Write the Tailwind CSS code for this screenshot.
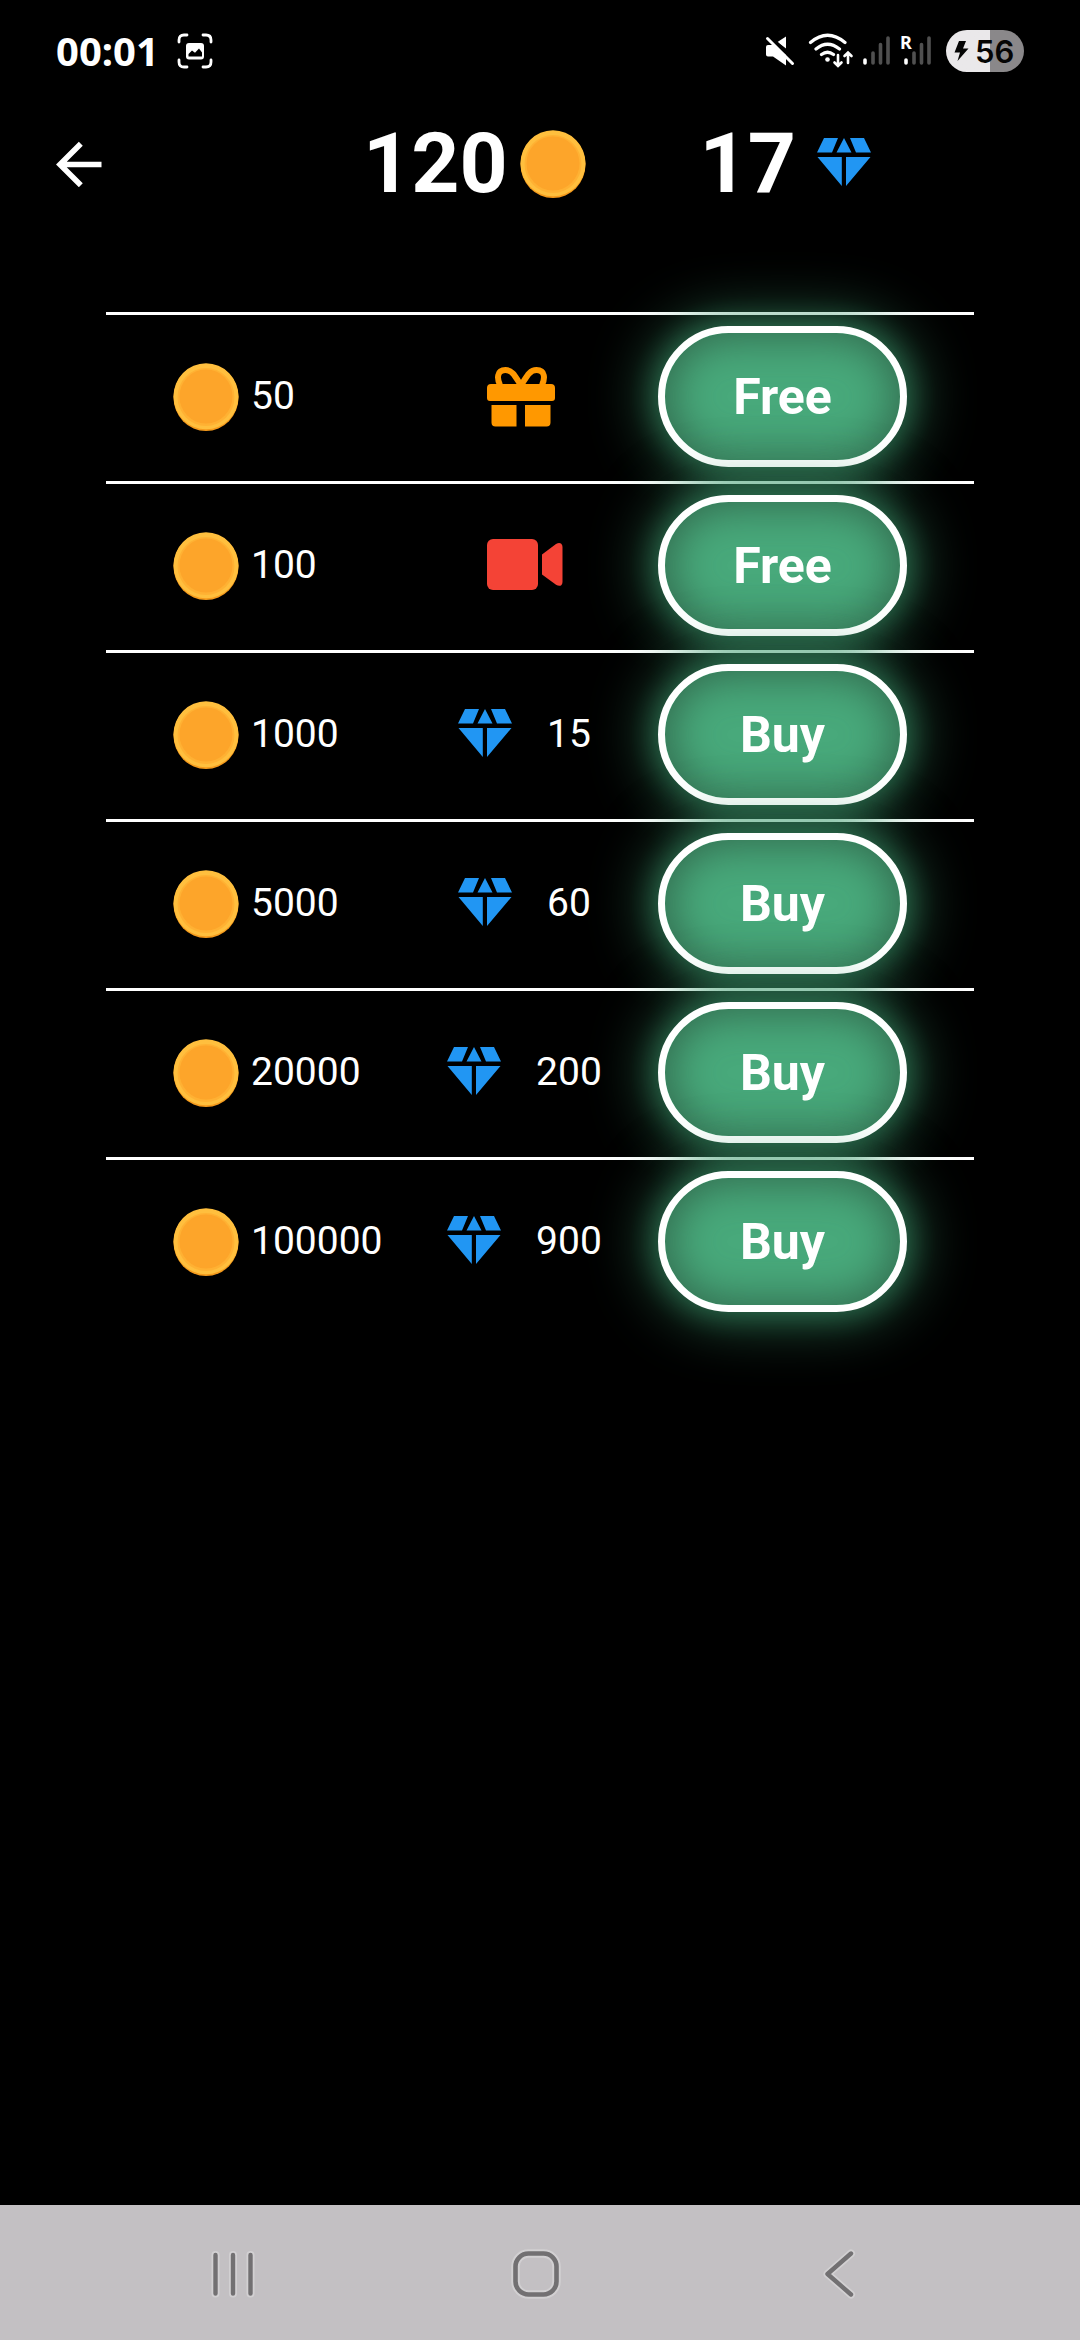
<!DOCTYPE html>
<html lang="en">
<head>
<meta charset="utf-8">
<meta name="viewport" content="width=device-width, initial-scale=1">
<title>Coin shop</title>
<script src="https://cdn.jsdelivr.net/npm/@tailwindcss/browser@4"></script>
</head>
<body class="flex min-h-screen flex-col bg-black font-['Roboto',sans-serif] text-white">

<!-- shared icons -->
<svg class="hidden" aria-hidden="true">
  <symbol id="coin" viewBox="0 0 66 68">
    <ellipse cx="33" cy="34.500" rx="32.500" ry="33.500" fill="#f59a1c"/>
    <ellipse cx="33" cy="33.300" rx="32.500" ry="33" fill="#ffbf3e"/>
    <ellipse cx="33" cy="34" rx="28.500" ry="29" fill="#ffb133"/>
    <ellipse cx="33" cy="33.500" rx="26.500" ry="27" fill="#fda52a"/>
  </symbol>
  <symbol id="gem" viewBox="0 0 56 56">
    <path fill="#2196f3" d="M8 2H22L16 16.500H1ZM28 2L35.500 16.500H20.500ZM34 2H48L55 16.500H40ZM1.500 21H25.800V50ZM30 21H54.500L30 50Z"/>
  </symbol>
</svg>

<div class="flex h-[102px] items-center justify-between pr-[56px] pl-[56px]">
  <div class="flex items-center gap-[18px]">
    <span class="font-['Noto_Sans',sans-serif] text-[40px] leading-none font-bold">00:01</span>
    <svg class="size-9" viewBox="0 0 36 36" fill="none" stroke="#fff" stroke-width="2.800" stroke-linecap="round">
      <path d="M2 9V7Q2 2 7 2H10M26 2H29Q34 2 34 7V9M34 27V29Q34 34 29 34H26M10 34H7Q2 34 2 29V27"/>
      <rect x="9" y="10" width="18" height="16.500" rx="3" fill="#fff" stroke="none"/>
      <path d="M11.500 23.500V21L15 17.500L18 19.800L22 15.500L25 19.500V23.500Z" fill="#000" stroke="none"/>
    </svg>
  </div>
  <div class="flex items-center">
    <svg class="h-[42px] w-[181px]" viewBox="765 30 181 42" fill="none">
      <g fill="#fff">
        <path d="M766 47Q766 45 768 45H774L786 55V65.500L773 56.500H768Q766 56.500 766 54.500Z"/>
        <path d="M786 36.500V48.500L777.500 42Z"/>
      </g>
      <path d="M770 36.500L795 60.500" stroke="#000" stroke-width="3"/>
      <path d="M767.500 38.500L792.500 63.500" stroke="#fff" stroke-width="3" stroke-linecap="round"/>
      <g stroke="#fff" stroke-width="3.200" stroke-linecap="round">
        <path d="M810.500 42.500Q827.500 28 845 42.500M816 49Q827.500 39.500 839.500 49M821.500 54.500Q827.500 50 833.500 54.500"/>
        <path d="M838 55V65.500M834.500 62.500L838 66L841.500 62.500M848 63V53M844.500 56L848 52.500L851.500 56" stroke-width="2.600"/>
      </g>
      <circle cx="827.500" cy="59.500" r="2.300" fill="#fff"/>
      <g stroke-width="3.600" stroke-linecap="round" stroke="#505050">
        <path stroke="#fff" d="M865 60V63"/><path d="M873 53V63M880.500 44.500V63M888 38V63"/>
        <path stroke="#fff" d="M906 60V63"/><path d="M914 53V63M921.500 44.500V63M929 38V63"/>
      </g>
      <text x="900" y="49" fill="#fff" font-family="Noto Sans, sans-serif" font-size="18" font-weight="700">R</text>
    </svg>
    <div class="flex h-[42px] w-[78px] items-center rounded-full bg-linear-to-r from-[#eae8ea] from-56% to-[#8a888a] to-56% pl-2 text-[#050505]">
      <svg class="h-[22px] w-[15px]" viewBox="0 0 15 22"><path fill="#050505" d="M5 1H12L9 8.500H14.500L3.500 21L6 12.500H0.500Z"/></svg>
      <span class="ml-[6px] font-['Inter',sans-serif] text-[31px] leading-none font-semibold">56</span>
    </div>
  </div>
</div>

<header class="flex h-[124px] items-center pl-[56px]">
  <button type="button" aria-label="Back" class="size-[46px]">
    <svg class="size-[46px]" viewBox="0 0 46 46" fill="none" stroke="#fff" stroke-width="5.600"><path d="M45.500 23.500H5M24.800 2.800L4 23.500L24.800 44.200"/></svg>
  </button>
  <div class="ml-[261px] flex items-center gap-3">
    <span class="text-[84px] leading-none font-bold">120</span>
    <svg class="h-[68px] w-[66px]" role="img" aria-label="coins"><use href="#coin"/></svg>
  </div>
  <div class="ml-[114px] flex items-center gap-5">
    <span class="text-[84px] leading-none font-bold">17</span>
    <svg class="size-[56px]" role="img" aria-label="gems"><use href="#gem"/></svg>
  </div>
</header>

<main class="mt-[86px] flex-1 px-[106px]">
  <ul id="offers" class="text-[39px] leading-none"></ul>
</main>

<nav class="grid h-[135px] grid-cols-3 items-center justify-items-center bg-[#c3c0c3] pt-[2px] pr-[90px] pl-[82px]">
  <button type="button" aria-label="Recent apps" class="size-[54px]">
    <svg class="size-[54px]" viewBox="0 0 54 54" fill="none" stroke-linecap="round"><path stroke="#d2d0d2" stroke-width="8" d="M9.500 8V46.500M27 8V46.500M44.500 8V46.500"/><path stroke="#727072" stroke-width="4.400" d="M9.500 8V46.500M27 8V46.500M44.500 8V46.500"/></svg>
  </button>
  <button type="button" aria-label="Home" class="size-[54px]">
    <svg class="size-[54px]" viewBox="0 0 54 54" fill="none"><rect x="6.500" y="6.500" width="41" height="41" rx="13" stroke="#d2d0d2" stroke-width="8.500"/><rect x="6.500" y="6.500" width="41" height="41" rx="13" stroke="#727072" stroke-width="4.600"/></svg>
  </button>
  <button type="button" aria-label="Back" class="size-[54px]">
    <svg class="size-[54px]" viewBox="0 0 54 54" fill="none" stroke-linecap="round" stroke-linejoin="round"><path stroke="#d2d0d2" stroke-width="8" d="M39 6.500L15.500 27L39 47.500"/><path stroke="#727072" stroke-width="4.400" d="M39 6.500L15.500 27L39 47.500"/></svg>
  </button>
</nav>

<script>
  const gift = `<svg class="size-[78px]" viewBox="0 0 78 78" role="img" aria-label="Daily gift">
    <path fill="none" stroke="#ff9800" stroke-width="6" d="M36 27.500C31 20 28 12 20.500 12C11.500 12 12 21 15 27M36 27.500C41 20 44 12 51.500 12C60.500 12 60 21 57 27"/>
    <path fill="#ff9800" d="M6 26H66Q70 26 70 30V40Q70 43 67 43H5Q2 43 2 40V30Q2 26 6 26ZM6.500 47H31.500V68.500H10.500Q6.500 68.500 6.500 64.500ZM40 47H65.500V64.500Q65.500 68.500 61.500 68.500H40Z"/></svg>`;
  const video = `<svg class="size-[78px]" viewBox="0 0 78 78" role="img" aria-label="Watch a video">
    <rect x="2" y="12" width="51" height="51" rx="6" fill="#f44336"/>
    <path fill="#f44336" d="M57 27.500L71 17Q74 15.300 76 16.500Q77.500 17.500 77.500 20V55Q77.500 57.500 76 58.500Q74 59.500 71 57.800L57 47.500Z"/></svg>`;
  const gems = n => `<svg class="size-[56px]" role="img" aria-label="gems"><use href="#gem"/></svg><span>${n}</span>`;
  const offers = [
    [50, gift, 'Free'], [100, video, 'Free'], [1000, gems(15), 'Buy'],
    [5000, gems(60), 'Buy'], [20000, gems(200), 'Buy'], [100000, gems(900), 'Buy']
  ];
  document.getElementById('offers').innerHTML = offers.map(([coins, price, label]) => `
    <li class="flex h-[169px] items-start border-t-3 border-white px-[67px] pt-[11px]">
      <div class="flex h-[141px] flex-1 items-center gap-3">
        <svg class="h-[68px] w-[66px]" role="img" aria-label="coins"><use href="#coin"/></svg>
        <span>${coins}</span>
      </div>
      <div class="flex h-[141px] w-[268px] items-center justify-center gap-[34px]">${price}</div>
      <button type="button" class="h-[141px] w-[249px] rounded-full border-7 border-white bg-[#48a97b] text-[50px] leading-none font-bold shadow-[0_0_60px_8px_#48a97b90,0_0_28px_4px_#2f8a6080,inset_0_0_40px_6px_#2c5c44c8]">${label}</button>
    </li>`).join('');
</script>
</body>
</html>
